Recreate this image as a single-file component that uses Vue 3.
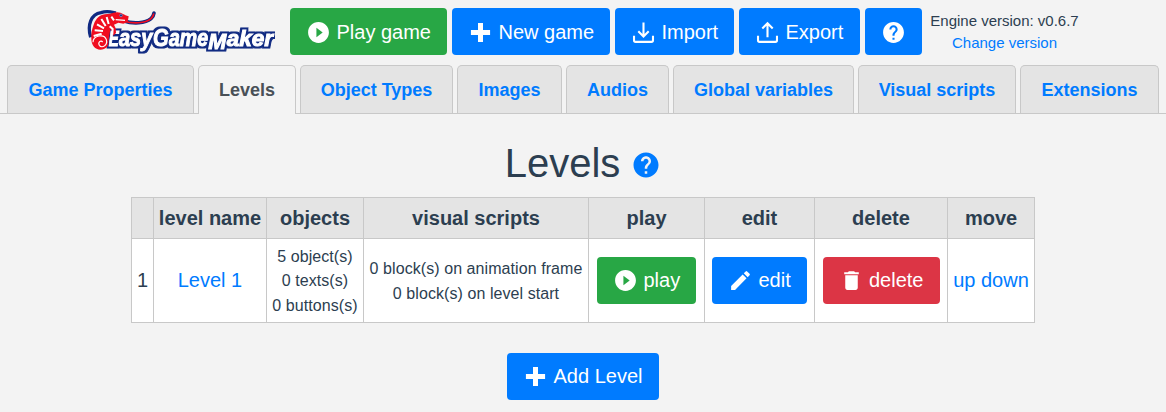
<script setup>
import { h } from 'vue'

const paths = {
  play: 'M12 2C6.48 2 2 6.48 2 12s4.48 10 10 10 10-4.48 10-10S17.52 2 12 2zM10 16.5v-9l6 4.5z',
  plus: 'M9.6 2.8h4.8v6.8h6.8v4.8h-6.8v6.8H9.6v-6.8H2.8V9.6h6.8z',
  help: 'M12 2C6.48 2 2 6.48 2 12s4.48 10 10 10 10-4.48 10-10S17.52 2 12 2zm1 17h-2v-2h2v2zm2.07-7.75l-.9.92C13.45 12.9 13 13.5 13 15h-2v-.5c0-1.1.45-2.1 1.17-2.83l1.24-1.26c.37-.36.59-.86.59-1.41 0-1.1-.9-2-2-2s-2 .9-2 2H8c0-2.21 1.79-4 4-4s4 1.79 4 4c0 .88-.36 1.68-.93 2.25z',
  edit: 'M3 17.25V21h3.75L17.81 9.94l-3.75-3.75zM20.71 7.04a1 1 0 0 0 0-1.41l-2.34-2.34a1 1 0 0 0-1.41 0l-1.83 1.83 3.75 3.75z',
  trash: 'M6 19c0 1.1.9 2 2 2h8c1.1 0 2-.9 2-2V7H6zM19 4h-3.5l-1-1h-5l-1 1H5v2h14z',
  import: 'M2.9 15v4.5c0 .9.6 1.5 1.5 1.5h15.2c.9 0 1.5-.6 1.5-1.5V15M12 2.5v13M7 10.8l5 5 5-5',
  export: 'M2.9 15v4.5c0 .9.6 1.5 1.5 1.5h15.2c.9 0 1.5-.6 1.5-1.5V15M12 16.5v-13M7 8.2l5-5 5 5'
}

const Icon = (props) => {
  const outlined = props.name === 'import' || props.name === 'export'
  return h('svg', { viewBox: '0 0 24 24', 'aria-hidden': 'true' }, [
    h('path', {
      d: paths[props.name],
      fill: outlined ? 'none' : 'currentColor',
      'fill-rule': 'evenodd',
      stroke: outlined ? 'currentColor' : 'none',
      'stroke-width': 2
    })
  ])
}
Icon.props = ['name']

const tabs = [
  { label: 'Game Properties', width: 187 },
  { label: 'Levels', width: 98, active: true },
  { label: 'Object Types', width: 153 },
  { label: 'Images', width: 105 },
  { label: 'Audios', width: 103 },
  { label: 'Global variables', width: 181 },
  { label: 'Visual scripts', width: 158 },
  { label: 'Extensions', width: 139 }
]

const wordmark = [
  { text: 'E', x: 83, y: 139, size: 66, width: 30 },
  { text: 'asy', x: 114, y: 139, size: 70, width: 100 },
  { text: 'G', x: 216, y: 139, size: 73, width: 47 },
  { text: 'ame', x: 264, y: 138, size: 69, width: 117 },
  { text: 'M', x: 382, y: 146, size: 66, width: 54 },
  { text: 'aker', x: 437, y: 137, size: 66, width: 139 }
]
</script>

<template>
  <main class="app">
    <header class="toolbar">
      <svg class="logo" viewBox="12 24 570 138" role="img" aria-label="EasyGameMaker">
        <defs>
          <filter id="wordmark-outline" x="-5%" y="-20%" width="110%" height="140%" color-interpolation-filters="sRGB">
            <feMorphology in="SourceAlpha" operator="dilate" radius="5" result="wide" />
            <feFlood flood-color="#102a82" />
            <feComposite in2="wide" operator="in" result="edge" />
            <feMerge><feMergeNode in="edge" /><feMergeNode in="SourceGraphic" /></feMerge>
          </filter>
        </defs>
        <g class="word" filter="url(#wordmark-outline)">
          <text v-for="l in wordmark" :key="l.text" :x="l.x" :y="l.y" :font-size="l.size" :textLength="l.width" lengthAdjust="spacingAndGlyphs">{{ l.text }}</text>
        </g>
        <path d="M29 112C18 74 30 43 60 38c20-7 34-1 45 1" fill="none" stroke="#102a82" stroke-width="10" />
        <path d="M127 62c30 11 66 8 83-6 7-6 8-9 9-17" fill="none" stroke="#102a82" stroke-width="11" stroke-linecap="round" />
        <path d="M127 62c30 11 66 8 83-6 6-6 7-9 8-14" fill="none" stroke="#f00d20" stroke-width="5" stroke-linecap="round" />
        <path d="M143 49c-14-3-20-12-34-12-12 0-17 5-28 5-21-1-36 11-43 32-6 15-8 29-7 44 1 19 11 31 27 31 16 0 26-11 24-24l3-18 3-20 6 9 3 11 8-8-1-14-5-11 13-6 15 3 13-5z" fill="#f00d20" />
        <path d="M61 57l13 21M77 51l6 21M48 73l21 12M41 91l25 2M38 108l24-7M91 50l8 11M86 79l9 8-1 16" fill="none" stroke="#fff" stroke-width="6" />
        <path d="M104 59l28 2M36 127c0-21 34-27 40-8 5 16-13 28-21 17-5-9 4-17 10-10" fill="none" stroke="#fff" stroke-width="3.5" />
        <circle cx="120" cy="46" r="4" fill="#102a82" stroke="#8c9bd0" stroke-width="2" />
      </svg>
      <nav class="actions">
        <button class="btn green w-play-game"><Icon class="icon" name="play" />Play game</button>
        <button class="btn w-new"><Icon class="icon" name="plus" />New game</button>
        <button class="btn w-import"><Icon class="icon" name="import" />Import</button>
        <button class="btn w-export"><Icon class="icon" name="export" />Export</button>
        <button class="btn w-help" aria-label="Help"><Icon class="icon" name="help" /></button>
      </nav>
      <div class="version">
        <span>Engine version: v0.6.7</span>
        <a>Change version</a>
      </div>
    </header>

    <nav class="tabs">
      <a v-for="t in tabs" :key="t.label" class="tab" :class="{ active: t.active }" :style="{ width: t.width + 'px' }">{{ t.label }}</a>
    </nav>

    <h1>Levels <Icon class="heading-icon" name="help" /></h1>

    <table>
      <colgroup>
        <col class="c-num"><col class="c-name"><col class="c-objects"><col class="c-scripts">
        <col class="c-play"><col class="c-edit"><col class="c-delete"><col class="c-move">
      </colgroup>
      <thead>
        <tr><th></th><th>level name</th><th>objects</th><th>visual scripts</th><th>play</th><th>edit</th><th>delete</th><th>move</th></tr>
      </thead>
      <tbody>
        <tr>
          <td>1</td>
          <td><a>Level 1</a></td>
          <td class="small">5 object(s)<br>0 texts(s)<br>0 buttons(s)</td>
          <td class="small">0 block(s) on animation frame<br>0 block(s) on level start</td>
          <td><button class="btn green w-play"><Icon class="icon" name="play" />play</button></td>
          <td><button class="btn w-edit"><Icon class="icon" name="edit" />edit</button></td>
          <td><button class="btn red w-delete"><Icon class="icon" name="trash" />delete</button></td>
          <td><a>up</a> <a>down</a></td>
        </tr>
      </tbody>
    </table>

    <div class="footer">
      <button class="btn w-add"><Icon class="icon" name="plus" />Add Level</button>
    </div>
  </main>
</template>

<style>
body { background: #f3f3f3; }
</style>

<style scoped>
.app {
  height: 412px;
  overflow: hidden;
  background: #f3f3f3;
  color: #2c3e50;
  font-family: "Liberation Sans", Arial, sans-serif;
  font-size: 20px;
}
.app * { box-sizing: border-box; }
a { color: #007bff; }
.toolbar { display: flex; height: 65px; padding: 8px 0 0 85px; }
.logo { width: 190px; height: 46px; margin-right: 15px; flex: none; }
.word {
  font-family: "Liberation Sans", Arial, sans-serif;
  font-weight: bold;
  font-style: italic;
  fill: #fff;
  stroke: #fff;
  stroke-width: 3px;
}
.actions { display: flex; gap: 5px; }
.btn {
  display: inline-flex;
  align-items: center;
  justify-content: flex-start;
  gap: 5.5px;
  height: 47px;
  padding: 0 0 0 16px;
  border: 0;
  border-radius: 4px;
  background: #007bff;
  color: #fff;
  font: 20px "Liberation Sans", Arial, sans-serif;
  white-space: nowrap;
  vertical-align: middle;
}
.actions .btn { padding-top: 2px; }
.green { background: #28a745; }
.red { background: #dc3545; }
.icon { width: 25px; height: 25px; flex: none; }
.w-play-game { width: 157px; }
.w-new { width: 158px; }
.w-import { width: 119px; }
.w-export { width: 121px; }
.w-help { width: 57px; }
.w-play { width: 99px; }
.w-edit { width: 95px; }
.w-delete { width: 117px; }
.w-add { width: 152px; }
.version {
  display: flex;
  flex-direction: column;
  align-items: center;
  width: 149px;
  margin: 2px 0 0 8px;
  font-size: 15px;
  line-height: 22px;
  white-space: nowrap;
}
.tabs { display: flex; gap: 4px; height: 49px; padding: 0 7px; border-bottom: 1px solid #c8c8c8; }
.tab {
  flex: none;
  height: 48px;
  border: 1px solid #c8c8c8;
  border-bottom: 0;
  border-radius: 5px 5px 0 0;
  background: #e4e4e4;
  font-size: 18px;
  font-weight: bold;
  line-height: 48px;
  text-align: center;
  white-space: nowrap;
}
.active { height: 49px; background: #f3f3f3; color: #495057; }
h1 {
  display: flex;
  align-items: center;
  justify-content: center;
  gap: 11px;
  height: 48px;
  margin: 25px 0 10px;
  font-size: 40px;
  font-weight: normal;
}
.heading-icon { width: 30px; height: 30px; color: #007bff; position: relative; top: 2px; }
table { width: 904px; margin: 0 auto; border-collapse: collapse; table-layout: fixed; background: #fff; }
th, td { padding: 0; border: 1px solid #c8c8c8; text-align: center; white-space: nowrap; }
th { height: 41px; background: #e4e4e4; }
td { height: 84px; }
.c-num { width: 22px; }
.c-name { width: 113px; }
.c-objects { width: 97px; }
.c-scripts { width: 225px; }
.c-play { width: 116px; }
.c-edit { width: 110px; }
.c-delete { width: 133px; }
.c-move { width: 87px; }
.small { padding-top: 2px; font-size: 16px; line-height: 24.5px; letter-spacing: 0.07px; }
.footer { display: flex; justify-content: center; padding-top: 30px; }
</style>
